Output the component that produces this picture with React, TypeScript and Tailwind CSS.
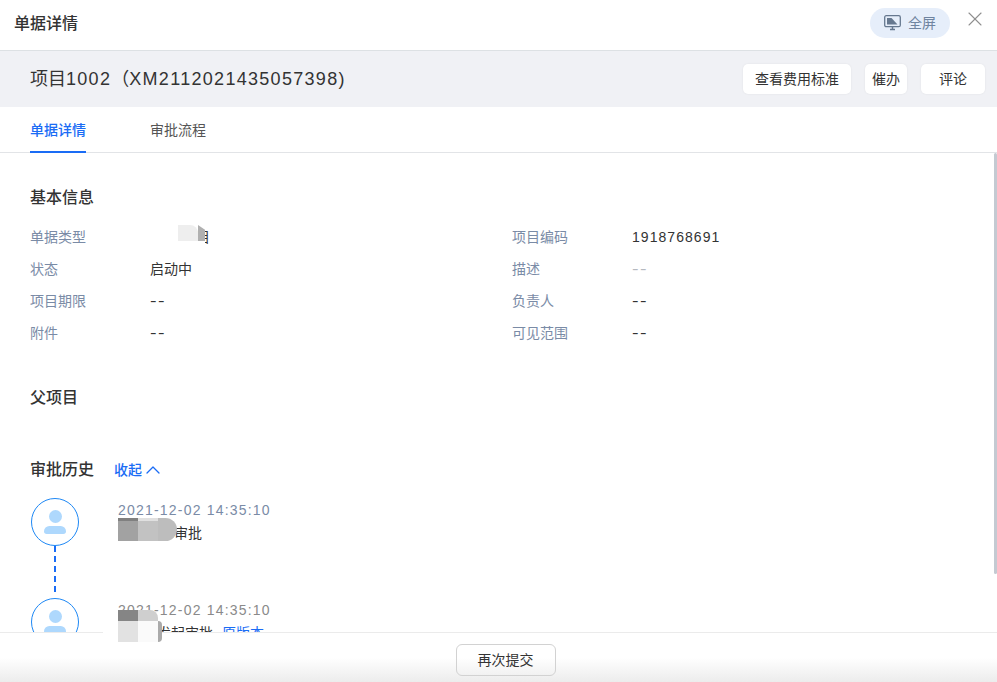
import { ChevronUp, X } from "lucide-react"

const FONT = "font-['Liberation_Sans','Noto_Sans_CJK_SC',sans-serif]"

type Row = { label: string; value: string; mosaic?: boolean; light?: boolean; kind?: "code" | "dash" }

const LEFT_ROWS: Row[] = [
  { label: "单据类型", value: "项目", mosaic: true },
  { label: "状态", value: "启动中" },
  { label: "项目期限", value: "--", kind: "dash" },
  { label: "附件", value: "--", kind: "dash" },
]

const RIGHT_ROWS: Row[] = [
  { label: "项目编码", value: "1918768691", kind: "code" },
  { label: "描述", value: "--", light: true, kind: "dash" },
  { label: "负责人", value: "--", kind: "dash" },
  { label: "可见范围", value: "--", kind: "dash" },
]

function InfoRow({ row }: { row: Row }) {
  const spacing = row.kind === "code" ? "tracking-[1.05px]" : row.kind === "dash" ? "inline-block origin-left scale-x-[1.4] tracking-[1px]" : ""
  return (
    <div className="flex h-8 items-center text-sm">
      <span className="w-[120px] shrink-0 text-[#7a8ba6]">{row.label}</span>
      <span className={`relative ${spacing} ${row.mosaic ? "pl-[32px]" : ""} ${row.light ? "text-[#b5b9c0]" : "text-[#333]"}`}>
        {row.value}
        {row.mosaic && (
          <>
            <span className="absolute top-[14px] left-0 h-[6px] w-[55px] bg-white" />
            <span className="absolute top-[-2px] left-[28px] flex h-4">
              <span className="h-4 w-5 rounded-tr-lg bg-[#eeeeee]" />
              <span className="h-4 w-[7px] bg-[#b0b0b0] [clip-path:polygon(0_0,100%_30%,100%_100%,0_100%)]" />
            </span>
          </>
        )}
      </span>
    </div>
  )
}

function Avatar() {
  return (
    <div className="flex h-12 w-12 shrink-0 flex-col items-center justify-center rounded-full border border-[#1e88f5] bg-white">
      <span className="h-[13px] w-[13px] rounded-full bg-[#aed8fd]" />
      <span className="mt-[3px] h-2 w-[22px] rounded-t-[8px] rounded-b-[4px] bg-[#aed8fd]" />
    </div>
  )
}

export default function App() {
  return (
    <div className={`relative flex h-[682px] w-[997px] flex-col overflow-hidden bg-white ${FONT}`}>
      <div className="flex h-[51px] shrink-0 items-center justify-between border-b border-[#dde1e4] pr-[10px] pl-[14px]">
        <h1 className="pb-[2px] text-base font-medium text-[#333]">单据详情</h1>
        <div className="flex items-center gap-[13px] pb-[5px]">
          <button className="flex h-[30px] w-20 items-center justify-center gap-[7px] rounded-full bg-[#e6eefa] text-sm text-[#6f84a0]">
            <svg viewBox="0 0 17 16" className="h-4 w-[17px]">
              <rect x="0.7" y="0.7" width="15.6" height="11" rx="1.5" fill="none" stroke="#66788f" strokeWidth="1.3" />
              <path d="M3 3h4.5l6 6.5H3z" fill="#66788f" />
              <path d="M6 14.5h5M8.5 12v2.5" stroke="#66788f" strokeWidth="1.5" />
            </svg>
            全屏
          </button>
          <X className="mb-2 h-6 w-6 text-[#8f8f8f]" strokeWidth={1.1} />
        </div>
      </div>

      <div className="flex h-14 shrink-0 items-center justify-between bg-[#f0f1f5] pr-3 pl-[30px]">
        <h2 className="text-lg font-normal text-[#333]">
          项目<span className="tracking-[1.3px]">1002</span>（<span className="tracking-[1.3px]">XM2112021435057398)</span>
        </h2>
        <div className="flex items-center gap-[14px]">
          <button className="h-[30px] w-[108px] rounded-[5px] bg-white text-sm text-[#333] shadow-[0_0_2px_rgba(0,0,0,0.08)]">查看费用标准</button>
          <button className="h-[30px] w-[42px] rounded-[5px] bg-white text-sm text-[#333] shadow-[0_0_2px_rgba(0,0,0,0.08)]">催办</button>
          <button className="h-[30px] w-[64px] rounded-[5px] bg-white text-sm text-[#333] shadow-[0_0_2px_rgba(0,0,0,0.08)]">评论</button>
        </div>
      </div>

      <div className="flex h-[46px] shrink-0 gap-[65px] border-b border-[#e2e4e7] pl-[30px] text-sm">
        <span className="flex h-[46px] items-center border-b-2 border-[#1a6cf5] pt-[2px] font-medium text-[#1a6cf5]">单据详情</span>
        <span className="-ml-px flex h-[46px] items-center pb-px text-[#555]">审批流程</span>
      </div>

      <div className="relative flex-1 overflow-hidden px-[30px] pt-[33px]">
        <div className="absolute top-0 right-0 h-[421px] w-[3px] rounded-sm bg-[#c4cad2]" />

        <h3 className="text-base leading-6 font-medium text-[#333]">基本信息</h3>
        <div className="mt-[11px] grid grid-cols-[482px_1fr]">
          <div>{LEFT_ROWS.map((r) => <InfoRow key={r.label} row={r} />)}</div>
          <div>{RIGHT_ROWS.map((r) => <InfoRow key={r.label} row={r} />)}</div>
        </div>

        <h3 className="mt-[37px] text-base leading-6 font-medium text-[#333]">父项目</h3>

        <div className="mt-[48px] flex h-6 items-center">
          <h3 className="text-base font-medium text-[#333]">审批历史</h3>
          <button className="ml-5 flex items-center text-sm font-medium text-[#1a6cf5]">
            收起<ChevronUp className="-ml-px h-6 w-6" strokeWidth={1.3} />
          </button>
        </div>

        <div className="mt-4 flex gap-[39px] pl-px">
          <div className="flex flex-col items-center">
            <Avatar />
            <div className="h-[46px] w-0 border-l-2 border-dashed border-[#1a6cf5]" />
          </div>
          <div className="relative pt-1">
            <p className="text-sm leading-4 tracking-[1.2px] text-[#7a8ba6]">2021-12-02 14:35:10</p>
            <p className="mt-[5px] pl-[56px] text-sm leading-5 text-[#333]">审批</p>
            <div className="absolute top-5 left-0 flex h-[23px] w-[59px]">
              <span className="w-5 border-t-[3px] border-[#808080] bg-[#a2a2a2]" />
              <span className="w-5 border-t-[3px] border-[#e0e0e0] bg-[#c2c2c2]" />
              <span className="w-[19px] rounded-r-xl bg-[#bdbdbd]" />
            </div>
          </div>
        </div>

        <div className="mt-[6px] flex gap-[39px] pl-px">
          <Avatar />
          <div className="pt-1">
            <p className="text-sm leading-4 tracking-[1.2px] text-[#8a8a8a]">2021-12-02 14:35:10</p>
            <p className="mt-[5px] pl-[39px] text-sm leading-5 text-[#333]">
              发起审批<span className="ml-[9px] text-[#1a6cf5]">原版本</span>
            </p>
          </div>
        </div>
      </div>

      <div className="absolute right-0 bottom-0 left-0 flex h-[50px] items-center justify-center border-t border-[#ebebeb] bg-gradient-to-b from-white via-white to-[#ececec] pt-[5px] pl-[14px]">
        <button className="h-8 w-[100px] rounded-md border border-[#d2d2d2] text-sm text-[#333]">再次提交</button>
      </div>

      <div className="absolute top-[632px] left-[103px] h-[3px] w-[15px] bg-white" />
      <div className="absolute top-[610px] left-[118px] h-[32px] w-[44px]">
        <div className="flex h-[11px]">
          <span className="w-5 bg-[#858585]" />
          <span className="w-5 rounded-tr-lg bg-[#cfcfcf]" />
        </div>
        <div className="flex h-[21px]">
          <span className="w-5 bg-[#e2e2e2]" />
          <span className="w-5 bg-[#fafafa]" />
          <span className="w-1 rounded-r-md bg-[#aaaaaa]" />
        </div>
      </div>
    </div>
  )
}
